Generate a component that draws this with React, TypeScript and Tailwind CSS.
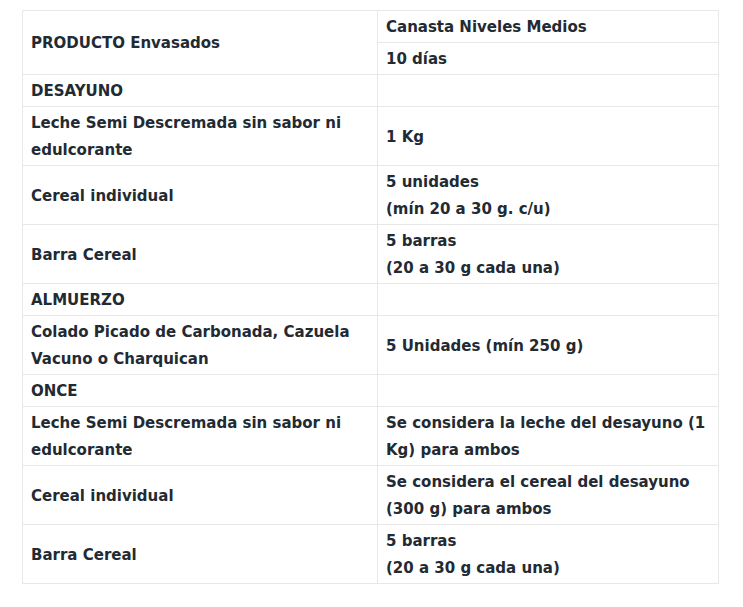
const rows: { left: React.ReactNode; right: React.ReactNode }[] = [
  { left: 'DESAYUNO', right: '' },
  {
    left: (
      <>
        Leche Semi Descremada sin sabor ni
        <br />
        edulcorante
      </>
    ),
    right: '1 Kg',
  },
  {
    left: 'Cereal individual',
    right: (
      <>
        5 unidades
        <br />
        (mín 20 a 30 g. c/u)
      </>
    ),
  },
  {
    left: 'Barra Cereal',
    right: (
      <>
        5 barras
        <br />
        (20 a 30 g cada una)
      </>
    ),
  },
  { left: 'ALMUERZO', right: '' },
  {
    left: (
      <>
        Colado Picado de Carbonada, Cazuela
        <br />
        Vacuno o Charquican
      </>
    ),
    right: '5 Unidades (mín 250 g)',
  },
  { left: 'ONCE', right: '' },
  {
    left: (
      <>
        Leche Semi Descremada sin sabor ni
        <br />
        edulcorante
      </>
    ),
    right: (
      <>
        Se considera la leche del desayuno (1
        <br />
        Kg) para ambos
      </>
    ),
  },
  {
    left: 'Cereal individual',
    right: (
      <>
        Se considera el cereal del desayuno
        <br />
        (300 g) para ambos
      </>
    ),
  },
  {
    left: 'Barra Cereal',
    right: (
      <>
        5 barras
        <br />
        (20 a 30 g cada una)
      </>
    ),
  },
]

const cell = 'border border-[#e8e8e8] px-2 pt-[3px] pb-[1px] align-middle'

export default function App() {
  return (
    <div className="bg-white min-h-[607px] pt-[10px] pl-[22px] font-['DejaVu_Sans',sans-serif] text-[15px] font-bold leading-[27px] text-[#222a33]">
      <table className="border-collapse w-[696px] table-fixed">
        <colgroup>
          <col className="w-[355px]" />
          <col className="w-[341px]" />
        </colgroup>
        <tbody>
          <tr>
            <td rowSpan={2} className={cell}>
              PRODUCTO Envasados
            </td>
            <td className={cell}>Canasta Niveles Medios</td>
          </tr>
          <tr>
            <td className={cell}>10 días</td>
          </tr>
          {rows.map((r, i) => (
            <tr key={i}>
              <td className={cell}>{r.left}</td>
              <td className={cell}>{r.right}</td>
            </tr>
          ))}
        </tbody>
      </table>
    </div>
  )
}
